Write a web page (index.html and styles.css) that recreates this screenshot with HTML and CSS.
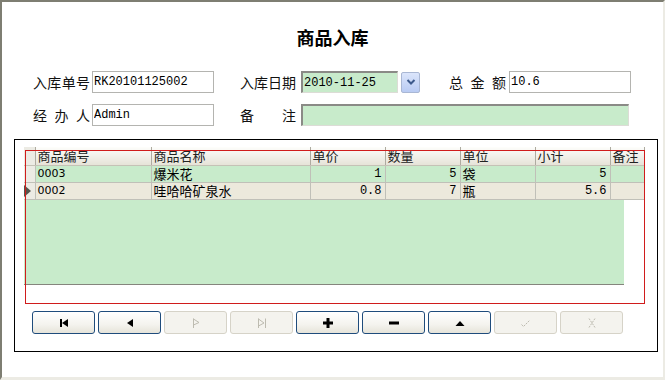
FILE: index.html
```html
<!DOCTYPE html>
<html lang="zh-CN">
<head>
    <meta charset="UTF-8">
    <title>商品入库</title>
    <link rel="stylesheet" href="styles.css">
</head>
<body>
    <div class="window">
        <h1 class="title">商品入库</h1>

        <div class="form">
            <div class="form-row">
                <span class="label lab-1">入库单号</span>
                <input class="field f-short" type="text" value="RK20101125002">
                <span class="label lab-2">入库日期</span>
                <input class="field f-date sunken" type="text" value="2010-11-25">
                <span class="drop">
                    <svg width="10" height="8" viewBox="0 0 10 8"><path d="M1.5 2 L5 5.5 L8.5 2" fill="none" stroke="#3d5a8c" stroke-width="2"/></svg>
                </span>
                <span class="label lab-3">总金额</span>
                <input class="field f-short" type="text" value="10.6">
            </div>
            <div class="form-row">
                <span class="label lab-1">经办人</span>
                <input class="field f-short" type="text" value="Admin">
                <span class="label lab-2">备注</span>
                <input class="field f-memo sunken" type="text" value="">
            </div>
        </div>

        <div class="frame">
            <div class="grid">
                <table class="grid-table">
                    <colgroup>
                        <col style="width:11px"><col style="width:116px"><col style="width:159px">
                        <col style="width:75px"><col style="width:75px"><col style="width:75px">
                        <col style="width:75px"><col style="width:34px">
                    </colgroup>
                    <thead>
                        <tr>
                            <th class="ind"></th>
                            <th>商品编号</th>
                            <th>商品名称</th>
                            <th>单价</th>
                            <th>数量</th>
                            <th>单位</th>
                            <th>小计</th>
                            <th>备注</th>
                        </tr>
                    </thead>
                    <tbody>
                        <tr class="row-green">
                            <td class="ind"></td>
                            <td class="code">0003</td>
                            <td class="cn">爆米花</td>
                            <td class="num">1</td>
                            <td class="num">5</td>
                            <td class="cn">袋</td>
                            <td class="num">5</td>
                            <td></td>
                        </tr>
                        <tr class="row-current">
                            <td class="ind">
                                <svg width="7" height="12" viewBox="0 0 7 12"><path d="M0 0 L7 6 L0 12 Z" fill="#55554d"/></svg>
                            </td>
                            <td class="code">0002</td>
                            <td class="cn">哇哈哈矿泉水</td>
                            <td class="num">0.8</td>
                            <td class="num">7</td>
                            <td class="cn">瓶</td>
                            <td class="num">5.6</td>
                            <td></td>
                        </tr>
                    </tbody>
                </table>
            </div>

            <div class="nav">
                <button class="nav-btn">
                    <svg width="12" height="10" viewBox="0 0 12 10"><rect x="2" y="1" width="2" height="8" fill="#000"/><path d="M4 5 L10 1 L10 9 Z" fill="#000"/></svg>
                </button>
                <button class="nav-btn">
                    <svg width="12" height="10" viewBox="0 0 12 10"><path d="M3 5 L9 1 L9 9 Z" fill="#000"/></svg>
                </button>
                <button class="nav-btn" disabled>
                    <svg width="12" height="12" viewBox="0 0 12 12"><path d="M3.5 1.5 L3.5 11 M3.5 2 L9 5.5 L3.5 8" fill="none" stroke="#bdbbb0" stroke-width="1"/></svg>
                </button>
                <button class="nav-btn" disabled>
                    <svg width="12" height="12" viewBox="0 0 12 12"><path d="M2.5 1.5 L2.5 11 M2.5 2 L8 6 L2.5 9 M9.5 1.5 L9.5 11" fill="none" stroke="#bdbbb0" stroke-width="1"/></svg>
                </button>
                <button class="nav-btn">
                    <svg width="12" height="12" viewBox="0 0 12 12"><path d="M4.5 1 H7.5 V4.5 H11 V7.5 H7.5 V11 H4.5 V7.5 H1 V4.5 H4.5 Z" fill="#000"/></svg>
                </button>
                <button class="nav-btn">
                    <svg width="12" height="12" viewBox="0 0 12 12"><rect x="1" y="4.5" width="10" height="3" fill="#000"/></svg>
                </button>
                <button class="nav-btn">
                    <svg width="12" height="10" viewBox="0 0 12 10"><path d="M1.5 8 L6 3 L10.5 8 Z" fill="#000"/></svg>
                </button>
                <button class="nav-btn" disabled>
                    <svg width="12" height="12" viewBox="0 0 12 12"><path d="M1.5 7.5 L3.5 9.5 L10 3" fill="none" stroke="#bdbbb0" stroke-width="1" stroke-dasharray="2 1"/></svg>
                </button>
                <button class="nav-btn" disabled>
                    <svg width="12" height="12" viewBox="0 0 12 12"><path d="M3 1.5 L9 10.5 M9 1.5 L3 10.5" fill="none" stroke="#bdbbb0" stroke-width="1" stroke-dasharray="2 1"/></svg>
                </button>
            </div>

            <div class="red-box"></div>
        </div>
    </div>
</body>
</html>
```

FILE: styles.css
```css
* {
    margin: 0;
    padding: 0;
    box-sizing: border-box;
}

body {
    background-color: #ffffff;
    font-family: "Noto Sans CJK SC", "Liberation Sans", sans-serif;
    color: #000;
}

.window {
    width: 665px;
    height: 380px;
    border-left: 2px solid #7e7e72;
    border-top: 2px solid #7e7e72;
    border-right: 2px solid #ecebe4;
    border-bottom: 3px solid #ecebe4;
    overflow: hidden;
}

.title {
    font-size: 18px;
    font-weight: bold;
    line-height: 22px;
    text-align: center;
    padding-top: 24px;
}

.form {
    margin-top: 23px;
    padding-left: 31px;
    display: flex;
    flex-direction: column;
    gap: 11px;
}

.form-row {
    display: flex;
    align-items: center;
    height: 22px;
}

.label {
    font-size: 14px;
    line-height: 22px;
    text-align-last: justify;
    white-space: nowrap;
    color: #111;
}

.lab-1 {
    width: 57px;
    margin-right: 2px;
}

.lab-2 {
    width: 56px;
    margin-left: 26px;
    margin-right: 5px;
}

.lab-3 {
    width: 57px;
    margin-left: 29px;
    margin-right: 3px;
}

.field {
    height: 22px;
    border: 1px solid #b4b4b0;
    background-color: #fff;
    font-family: "Liberation Mono", monospace;
    font-size: 12px;
    padding: 0 2px 0 1px;
    color: #000;
    outline: none;
}

.f-short {
    width: 122px;
}

.f-date {
    width: 97px;
}

.f-memo {
    width: 328px;
}

.sunken {
    background-color: #c8ebcb;
    border-top: 2px solid #8a8a86;
    border-left: 2px solid #8a8a86;
    border-right: 1px solid #dcdcd6;
    border-bottom: 1px solid #dcdcd6;
}

.drop {
    width: 19px;
    height: 21px;
    margin-left: 3px;
    border: 1px solid #a9b7d4;
    border-radius: 2px;
    background: linear-gradient(#dbe5fb, #b9cbf3);
    display: flex;
    align-items: center;
    justify-content: center;
}

.frame {
    position: relative;
    margin-top: 13px;
    margin-left: 12px;
    width: 644px;
    height: 213px;
    border: 1px solid #000;
}

.grid {
    margin-top: 7px;
    margin-left: 9px;
    width: 600px;
    height: 138px;
    background-color: #c8ebcb;
    border-bottom: 1px solid #85857d;
    overflow: visible;
}

.grid-table {
    width: 620px;
    table-layout: fixed;
    border-collapse: collapse;
}

.grid-table th {
    height: 18px;
    font-size: 13px;
    font-weight: normal;
    line-height: 17px;
    text-align: left;
    padding-left: 2px;
    color: #222;
    background: linear-gradient(#fdfdfb, #e6e3d8);
    border-right: 1px solid #aeaba0;
    border-bottom: 1px solid #c5c2b6;
    white-space: nowrap;
}

.grid-table td {
    height: 17px;
    font-size: 13px;
    line-height: 16px;
    border-right: 1px solid #c0c0b8;
    border-bottom: 1px solid #c0c0b8;
    white-space: nowrap;
}

.grid-table .ind {
    padding: 0;
    background: #ecebe4;
}

.grid-table td.ind svg {
    display: block;
    margin-top: 1px;
}

.row-green td {
    background-color: #c8ebcb;
}

.row-current td {
    background-color: #ece9dc;
}

.grid-table .code {
    font-family: "DejaVu Sans", sans-serif;
    font-size: 11px;
    padding-left: 2px;
}

.grid-table .cn {
    padding-left: 2px;
}

.grid-table .num {
    font-family: "Liberation Mono", monospace;
    font-size: 12px;
    text-align: right;
    padding-right: 3px;
}

.nav {
    display: flex;
    gap: 3px;
    margin-top: 26px;
    margin-left: 17px;
}

.nav-btn {
    width: 63px;
    height: 23px;
    border: 1px solid #1f4c7c;
    border-radius: 3px;
    background: linear-gradient(#ffffff, #f4f3ee 60%, #e6e4da);
    display: flex;
    align-items: center;
    justify-content: center;
}

.nav-btn:disabled {
    border-color: #d6d3c8;
    background: #f4f3ee;
}

.red-box {
    position: absolute;
    left: 10px;
    top: 10px;
    width: 620px;
    height: 154px;
    border: 1px solid #d01c1c;
    pointer-events: none;
}
```
